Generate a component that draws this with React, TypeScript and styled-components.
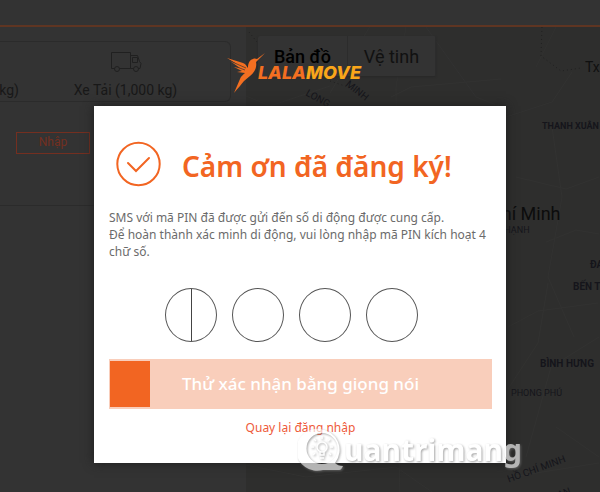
import React from "react";
import styled, { createGlobalStyle } from "styled-components";

const GlobalStyle = createGlobalStyle`
  * { box-sizing: border-box; }
  html, body, #root { height: 100%; }
  body { margin: 0; background: #333; overflow: hidden; font-family: "Noto Sans", sans-serif; }
`;

const orange = "#f26522";

const Page = styled.div`
  position: relative;
  display: flex;
  flex-direction: column;
  min-height: 100%;
  overflow: hidden;
`;

const TopBar = styled.header`
  height: 27px;
  background: #333;
  border-bottom: 2px solid #5f3522;
`;

const Workspace = styled.main`
  flex: 1;
  display: grid;
  grid-template-columns: 41fr 59fr;
  background: #333;
`;

const OrderPanel = styled.section`
  font-family: Roboto, sans-serif;
  padding-top: 14px;
  color: #181818;
  overflow: hidden;
`;

const VehicleRow = styled.div`
  display: grid;
  grid-template-columns: 19px 1fr;
  align-items: end;
  height: 61px;
  margin-right: 15px;
  padding-bottom: 2px;
  border: 1px solid #2b2b2b;
  border-left: 0;
  border-radius: 0 6px 6px 0;
  font-size: 14px;
  line-height: 18px;
`;

const ClippedLabel = styled.span`
  justify-self: end;
  white-space: nowrap;
`;

const Vehicle = styled.div`
  display: flex;
  flex-direction: column;
  align-items: center;
  gap: 9px;
  margin-right: -2px;
`;

const CouponRow = styled.div`
  display: flex;
  padding: 30px 0 0 16px;
  height: 104px;
  border-bottom: 1px solid #2b2b2b;
`;

const CouponButton = styled.button`
  width: 74px;
  height: 22px;
  padding: 0 0 3px;
  border: 1px solid #742f20;
  background: transparent;
  color: #742f20;
  font: 12px/16px Roboto, sans-serif;
`;

const MapCanvas = styled.section`
  position: relative;
  overflow: hidden;
  background: #2e2e2d;
  font-family: Roboto, sans-serif;
`;

const Roads = styled.svg`
  position: absolute;
  top: 0;
  left: 0;
`;

const MapLabel = styled.span<{ $x: number; $y: number; $size: number; $tilt?: number; $bold?: boolean; $tone?: string }>`
  position: absolute;
  left: ${(p) => p.$x}px;
  top: ${(p) => p.$y}px;
  font-size: ${(p) => p.$size}px;
  line-height: 1;
  font-weight: ${(p) => (p.$bold ? 700 : 400)};
  color: ${(p) => p.$tone ?? "#15151b"};
  transform: rotate(${(p) => p.$tilt ?? 0}deg);
  transform-origin: left top;
  white-space: nowrap;
`;

const MapSwitch = styled.div`
  position: absolute;
  top: 9px;
  left: 12px;
  display: flex;
  height: 40px;
  background: #333;
  border-radius: 2px;
  box-shadow: 0 1px 2px #282828;
`;

const MapMode = styled.button<{ $active?: boolean }>`
  padding: 0 16px;
  border: 0;
  border-right: 1px solid #2c2c2c;
  background: transparent;
  font: ${(p) => (p.$active ? 500 : 400)} 18px Roboto, sans-serif;
  color: ${(p) => (p.$active ? "#000" : "#111")};
`;

const Overlay = styled.div`
  position: absolute;
  inset: 0;
  display: flex;
  flex-direction: column;
  align-items: center;
  padding: 52px 94px 0;
`;

const Brand = styled.div`
  display: flex;
  align-items: flex-start;
  height: 54px;
  margin-right: 13px;
`;

const BrandName = styled.span`
  margin: 11px 0 0 -8px;
  font: italic 800 18px/20px Inter, "Liberation Sans", sans-serif;
  color: #f36f21;
`;

const BrandAccent = styled.span`
  color: #faa61a;
`;

const Dialog = styled.section`
  width: 100%;
  padding: 35px 14px 19px 15px;
  min-height: 357px;
  background: #fff;
  box-shadow: 0 0 10px #1c1c1c;
`;

const TitleRow = styled.div`
  display: flex;
  align-items: center;
  gap: 20px;
  padding-left: 7px;
`;

const Title = styled.h1`
  margin: 0;
  padding-top: 3px;
  font-size: 28px;
  line-height: 40px;
  font-weight: 600;
  color: ${orange};
  white-space: nowrap;
`;

const Message = styled.p`
  margin: 22px 0 0;
  font-size: 12px;
  line-height: 17px;
  color: #6b6b6b;
`;

const PinRow = styled.div`
  display: flex;
  justify-content: center;
  gap: 15px;
  margin-top: 28px;
  padding-right: 18px;
`;

const PinBox = styled.div`
  display: grid;
  width: 52px;
  height: 54px;
  border: 1px solid #555;
  border-radius: 50%;
`;

const PinInput = styled.input`
  grid-area: 1 / 1;
  width: 100%;
  border: 0;
  padding: 0;
  background: transparent;
  outline: 0;
  text-align: center;
  font: 20px "Noto Sans", sans-serif;
`;

const Caret = styled.i`
  grid-area: 1 / 1;
  justify-self: center;
  width: 1px;
  background: #444;
`;

const VoiceButton = styled.button`
  display: grid;
  grid-template-columns: 40px 1fr 40px;
  align-items: center;
  width: 100%;
  height: 50px;
  margin-top: 17px;
  padding: 1px;
  border: 0;
  background: #f9cebb;
  color: #fff;
  font: 500 17px/24px "Noto Sans", sans-serif;
`;

const Progress = styled.span`
  height: 46px;
  background: ${orange};
`;

const BackRow = styled.div`
  display: flex;
  justify-content: center;
  margin-top: 10px;
`;

const BackLink = styled.a`
  font-size: 12px;
  line-height: 18px;
  color: #ee5a3a;
  text-decoration: none;
`;

const Watermark = styled.div`
  position: absolute;
  right: 78px;
  bottom: 20px;
  display: flex;
  align-items: center;
  opacity: 0.65;
  filter: drop-shadow(1px 1px 1px #777);
  pointer-events: none;
`;

const WatermarkText = styled.span`
  margin-left: -2px;
  font: 700 30px/40px "Noto Sans", sans-serif;
  color: #fff;
`;

const Truck = () => (
  <svg width="32" height="20" viewBox="0 0 32 20" fill="none" stroke="#202020" strokeWidth="1" aria-hidden="true">
    <path d="M4.500 16.500h-3v-16h19v16H9.500M20.500 3.500h7l2 6 1.500 2-1 5h-2M23.500 16.500h-3M22.500 5.500h5v5h-5z" />
    <circle cx="7" cy="17" r="2.500" />
    <circle cx="26" cy="17" r="2.500" />
  </svg>
);

const Bird = () => (
  <svg width="40" height="41" viewBox="0 0 40 41" aria-hidden="true">
    <path
      fill="#f36f21"
      d="M39 1 30 10c1 5-1 10-6 14l-6 5c-3 4-6 7-10 12l6-14c1-3 3-4 5-6l-8-1 5-1-8-4 6 1-10-7 7 3L1 6l16 5c3 1 4 4 5 5 0-4 1-8 5-9 2-1 3 0 4 0z"
    />
    <path d="m4 9 16 7M8 14l11 4" fill="none" stroke="#333" strokeWidth="0.700" />
  </svg>
);

const CheckBadge = () => (
  <svg width="46" height="46" viewBox="0 0 46 46" fill="none" stroke={orange} strokeWidth="2" aria-hidden="true">
    <circle cx="22.500" cy="23" r="21.200" />
    <path d="m12 22 8 8 13-13" strokeLinecap="round" />
  </svg>
);

const BulbMark = () => (
  <svg width="48" height="44" viewBox="0 0 48 44" fill="none" stroke="#fff" aria-hidden="true">
    <path
      fill="#fff"
      fillRule="evenodd"
      stroke="none"
      d="M22 1a21 21 0 1 0 3 41h16c2 0 3-2 4-4-4 0-6-1-8-3A21 21 0 0 0 22 1zm2 4a15.500 15.500 0 1 1 0 31 15.500 15.500 0 0 1 0-31z"
    />
    <circle cx="24" cy="19" r="5" strokeWidth="1.500" />
    <path
      d="M22 24v3h4v-3M22 30h4M24 8v3M16 11l2 2M32 11l-2 2M13 19h3M35 19h-3M15 27l2-2M33 27l-2-2"
      strokeWidth="1.500"
    />
  </svg>
);

const roadLines = [
  "M84 66l42-70M76 43l69-10M160 0l-10 60 4 430M145 70l20-10 90-8M180 0l50 70 30 12M0 69l24 10 60-20",
  "M155 129l100 3M163 190l40 30 57-22M153 277l60-40 47-14M150 350l50-30 60 0M154 398l40 20 60-32",
  "M0 438l60 12 90-10 36 25M290 40l20-40M260 90l46-15 20-30M262 300l30-16 60-8M280 430l25-90 48-30M265 450l88-14",
  "M270 150l50 12 33-12M300 215l30-12 23 4M262 362l30-46 10-60M310 400l43 30M306 100l10 70-14 80 26 60",
];

const places = [
  { text: "LONG", x: 63, y: 61, size: 10, tilt: 29 },
  { text: "MINH", x: 104, y: 52, size: 10, tilt: 38 },
  { text: "THANH XUÂN", x: 296, y: 95, size: 9, bold: true },
  { text: "Tx.", x: 339, y: 33, size: 14, tone: "#101010" },
  { text: "Chí Minh", x: 244, y: 178, size: 18, tone: "#0c0c0c" },
  { text: "THẠNH", x: 253, y: 199, size: 9 },
  { text: "ĐA KAO", x: 344, y: 233, size: 10, bold: true },
  { text: "BẾN THÀNH", x: 327, y: 255, size: 10, bold: true },
  { text: "BÌNH HƯNG", x: 294, y: 332, size: 10, bold: true },
  { text: "PHONG PHÚ", x: 265, y: 362, size: 9 },
  { text: "HỒ CHÍ MINH", x: 260, y: 448, size: 10, tilt: -20 },
  { text: "AN", x: 310, y: 464, size: 10, tilt: -20 },
];

export default function App() {
  return (
    <>
      <GlobalStyle />
      <Page>
        <TopBar />
        <Workspace>
          <OrderPanel>
            <VehicleRow>
              <ClippedLabel>kg)</ClippedLabel>
              <Vehicle>
                <Truck />
                Xe Tải (1,000 kg)
              </Vehicle>
            </VehicleRow>
            <CouponRow>
              <CouponButton type="button">Nhập</CouponButton>
            </CouponRow>
          </OrderPanel>
          <MapCanvas>
            <Roads width="354" height="465" viewBox="0 0 354 465" fill="none" aria-hidden="true">
              {roadLines.map((d) => (
                <path key={d} d={d} stroke="#323231" strokeWidth="1" />
              ))}
              <path d="M3 5l8 10M84 54l30 10" stroke="#202020" strokeDasharray="1 3" />
              <path d="M296 0l-1 29 20 15 20-3" stroke="#202020" strokeDasharray="1 3" />
            </Roads>
            {places.map((p) => (
              <MapLabel key={p.text} $x={p.x} $y={p.y} $size={p.size} $tilt={p.tilt} $bold={p.bold} $tone={p.tone}>
                {p.text}
              </MapLabel>
            ))}
            <MapSwitch>
              <MapMode type="button" $active>
                Bản đồ
              </MapMode>
              <MapMode type="button">Vệ tinh</MapMode>
            </MapSwitch>
          </MapCanvas>
        </Workspace>
        <Overlay>
          <Brand>
            <Bird />
            <BrandName>
              LALA<BrandAccent>MOVE</BrandAccent>
            </BrandName>
          </Brand>
          <Dialog role="dialog" aria-labelledby="dialog-title">
            <TitleRow>
              <CheckBadge />
              <Title id="dialog-title">Cảm ơn đã đăng ký!</Title>
            </TitleRow>
            <Message>
              SMS với mã PIN đã được gửi đến số di động được cung cấp.
              <br />
              Để hoàn thành xác minh di động, vui lòng nhập mã PIN kích hoạt 4 chữ số.
            </Message>
            <PinRow>
              {[1, 2, 3, 4].map((n) => (
                <PinBox key={n}>
                  <PinInput aria-label={`PIN ${n}`} maxLength={1} inputMode="numeric" />
                  {n === 1 && <Caret />}
                </PinBox>
              ))}
            </PinRow>
            <VoiceButton type="button">
              <Progress />
              <span>Thử xác nhận bằng giọng nói</span>
            </VoiceButton>
            <BackRow>
              <BackLink href="#login">Quay lại đăng nhập</BackLink>
            </BackRow>
          </Dialog>
        </Overlay>
        <Watermark>
          <BulbMark />
          <WatermarkText>uantrimang</WatermarkText>
        </Watermark>
      </Page>
    </>
  );
}
